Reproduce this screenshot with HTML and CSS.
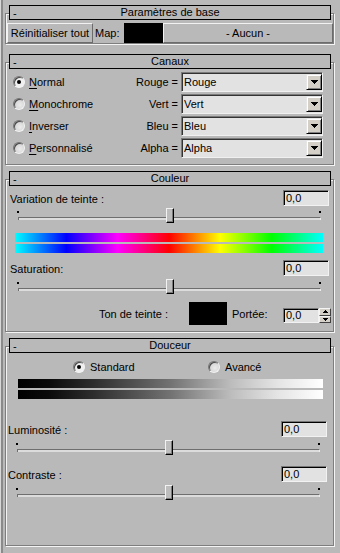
FILE: index.html
```html
<!DOCTYPE html>
<html lang="fr">
<head>
<meta charset="utf-8">
<title>Paramètres</title>
<link rel="stylesheet" href="styles.css">
</head>
<body>
<div class="panel">

  <section class="rollout r1">
    <div class="rhead"><span class="minus">-</span><span class="title">Paramètres de base</span><span></span></div>
    <div class="maprow">
      <div class="btn reset">Réinitialiser tout</div>
      <span class="maplabel">Map:</span>
      <div class="mapswatch"></div>
      <div class="btn aucun">- Aucun -</div>
    </div>
  </section>

  <section class="rollout r2">
    <div class="rhead"><span class="minus">-</span><span class="title">Canaux</span><span></span></div>
    <div class="chan">
      <div class="ritem"><span class="radio on"></span><span><u>N</u>ormal</span></div>
      <div class="clabel">Rouge =</div>
      <div class="dd"><span class="ddtext">Rouge</span><span class="ddbtn"><svg width="7" height="4" viewBox="0 0 7 4"><path d="M0 0h7v1h-1v1h-1v1h-1v1h-1v-1h-1v-1h-1v-1h-1z"/></svg></span></div>

      <div class="ritem"><span class="radio"></span><span><u>M</u>onochrome</span></div>
      <div class="clabel">Vert =</div>
      <div class="dd"><span class="ddtext">Vert</span><span class="ddbtn"><svg width="7" height="4" viewBox="0 0 7 4"><path d="M0 0h7v1h-1v1h-1v1h-1v1h-1v-1h-1v-1h-1v-1h-1z"/></svg></span></div>

      <div class="ritem"><span class="radio"></span><span><u>I</u>nverser</span></div>
      <div class="clabel">Bleu =</div>
      <div class="dd"><span class="ddtext">Bleu</span><span class="ddbtn"><svg width="7" height="4" viewBox="0 0 7 4"><path d="M0 0h7v1h-1v1h-1v1h-1v1h-1v-1h-1v-1h-1v-1h-1z"/></svg></span></div>

      <div class="ritem"><span class="radio"></span><span><u>P</u>ersonnalisé</span></div>
      <div class="clabel">Alpha =</div>
      <div class="dd"><span class="ddtext">Alpha</span><span class="ddbtn"><svg width="7" height="4" viewBox="0 0 7 4"><path d="M0 0h7v1h-1v1h-1v1h-1v1h-1v-1h-1v-1h-1v-1h-1z"/></svg></span></div>
    </div>
  </section>

  <section class="rollout r3">
    <div class="rhead"><span class="minus">-</span><span class="title">Couleur</span><span></span></div>
    <div class="vrow first">
      <span class="vlabel">Variation de teinte :</span>
      <div class="input">0,0</div>
    </div>
    <div class="slider s-coul first-s">
      <span class="tick tl"></span><span class="tick tr"></span>
      <span class="track"></span>
      <span class="thumb"></span>
    </div>
    <div class="bar hue hue1"></div>
    <div class="bar hue hue2"></div>
    <div class="vrow sat">
      <span class="vlabel">Saturation:</span>
      <div class="input">0,0</div>
    </div>
    <div class="slider s-coul">
      <span class="tick tl"></span><span class="tick tr"></span>
      <span class="track"></span>
      <span class="thumb"></span>
    </div>
    <div class="tonrow">
      <span class="tonlabel">Ton de teinte :</span>
      <div class="tonswatch"></div>
      <span class="portlabel">Portée:</span>
      <div class="input spin-input">0,0</div>
      <div class="spin">
        <span class="spinbtn up"><svg width="5" height="3" viewBox="0 0 5 3"><path d="M2 0h1v1h1v1h1v1h-5v-1h1v-1h1z"/></svg></span>
        <span class="spinbtn down"><svg width="5" height="3" viewBox="0 0 5 3"><path d="M0 0h5v1h-1v1h-1v1h-1v-1h-1v-1h-1z"/></svg></span>
      </div>
    </div>
  </section>

  <section class="rollout r4">
    <div class="rhead"><span class="minus">-</span><span class="title">Douceur</span><span></span></div>
    <div class="moderow">
      <div class="mode std"><span class="radio on"></span><span>Standard</span></div>
      <div class="mode"><span class="radio"></span><span>Avancé</span></div>
    </div>
    <div class="bar gray gray1"></div>
    <div class="bar gray gray2"></div>
    <div class="vrow lum">
      <span class="vlabel">Luminosité :</span>
      <div class="input">0,0</div>
    </div>
    <div class="slider s-douc">
      <span class="tick tl"></span><span class="tick tr"></span>
      <span class="track"></span>
      <span class="thumb"></span>
    </div>
    <div class="vrow con">
      <span class="vlabel">Contraste :</span>
      <div class="input">0,0</div>
    </div>
    <div class="slider s-douc">
      <span class="tick tl"></span><span class="tick tr"></span>
      <span class="track"></span>
      <span class="thumb"></span>
    </div>
  </section>

</div>
</body>
</html>
```

FILE: styles.css
```css
* { box-sizing: border-box; }

html, body {
  margin: 0;
  padding: 0;
}

body {
  width: 340px;
  height: 553px;
  overflow: hidden;
  background: #b9b9b9;
  color: #000;
  font-family: "Liberation Sans", Arial, sans-serif;
  font-size: 11px;
}

.panel {
  height: 553px;
  border-left: 1px solid #d8d8d8;
  box-shadow: inset 2px 0 0 #8a8a8a;
  padding: 13px 0 0 4px;
}

/* rollout frame (etched) */
.rollout {
  width: 329px;
  border: 1px solid #7e7e7e;
  box-shadow: inset 1px 1px 0 #f4f4f4, 1px 1px 0 #f4f4f4;
}

.r2, .r3, .r4 { margin-top: 14px; }
.r2 { margin-top: 18px; }

.rhead {
  height: 15px;
  margin: -9px 2px 0 3px;
  border: 1px solid #000;
  background: #b9b9b9;
  display: grid;
  grid-template-columns: 1fr auto 1fr;
  line-height: 13px;
}

.minus {
  padding: 1px 0 0 3px;
}

.title { text-align: center; }

/* generic raised button */
.btn {
  height: 20px;
  border: 1px solid;
  border-color: #f2f2f2 #6c6c6c #6c6c6c #f2f2f2;
  line-height: 18px;
  text-align: center;
  white-space: nowrap;
}

/* rollout 1 */
.maprow {
  display: flex;
  align-items: center;
  height: 20px;
  margin-top: 3px;
  padding-left: 1px;
}
.reset { width: 86px; }
.maplabel { width: 31px; padding-left: 2px; }
.mapswatch { width: 39px; height: 20px; background: #000; }
.aucun { flex: 1; }

/* rollout 2 */
.chan {
  display: grid;
  grid-template-columns: 1fr auto 142px;
  grid-auto-rows: 20px;
  row-gap: 2px;
  margin-top: 3px;
  padding: 0 10px 6px 0;
}

.ritem {
  display: flex;
  align-items: center;
  gap: 4px;
  padding-left: 7px;
  line-height: 20px;
}

u { text-underline-offset: 2px; }

.clabel {
  text-align: right;
  padding-right: 3px;
  line-height: 20px;
}

.radio {
  width: 12px;
  height: 12px;
  flex: none;
  border-radius: 50%;
  border: 1px solid;
  border-color: #777 #f2f2f2 #f2f2f2 #777;
  background: radial-gradient(circle at 60% 60%, #ececec 0, #d6d6d6 60%, #c4c4c4 100%);
  box-shadow: inset 1px 1px 0 #4a4a4a;
  display: grid;
  place-items: center;
}
.radio.on {
  background: #f0f0f0;
}
.radio.on::after {
  content: "";
  width: 4px;
  height: 4px;
  border-radius: 50%;
  background: #000;
}

.dd {
  display: flex;
  align-items: center;
  border: 1px solid;
  border-color: #7a7a7a #f0f0f0 #f0f0f0 #7a7a7a;
  box-shadow: inset 1px 1px 0 #333;
  background: #e2e2e2;
}
.ddtext {
  flex: 1;
  padding-left: 2px;
  line-height: 18px;
}
.ddbtn {
  width: 16px;
  height: 16px;
  background: #d4d0c8;
  border: 1px solid;
  border-color: #e6e6e6 #000 #000 #e6e6e6;
  box-shadow: inset 1px 1px 0 #fff, inset -1px -1px 0 #808080;
  display: grid;
  place-items: center;
}
.ddbtn svg, .spinbtn svg { display: block; }

/* value rows */
.vrow {
  display: flex;
  justify-content: space-between;
  align-items: center;
  height: 16px;
}
.vlabel { line-height: 16px; padding-top: 1px; }

.r3 .vrow { padding: 0 4px 0 4px; }
.r3 .vrow.first { margin-top: 4px; }
.r3 .vrow.sat { margin-top: 7px; }

.input {
  width: 46px;
  height: 16px;
  border: 1px solid;
  border-color: #777 #f2f2f2 #f2f2f2 #777;
  box-shadow: inset 1px 1px 0 #000;
  background: #e2e2e2;
  padding-left: 2px;
  line-height: 14px;
}

/* sliders */
.slider {
  position: relative;
  height: 15px;
  margin-top: 3px;
}
.s-coul { margin-left: 12px; margin-right: 12px; }
.s-coul.first-s { margin-top: 2px; }
.s-douc { margin-left: 11px; margin-right: 13px; }

.tick {
  position: absolute;
  top: 3px;
  width: 2px;
  height: 2px;
  background: #000;
}
.tick.tl { left: -1px; }
.tick.tr { right: 0; }

.track {
  position: absolute;
  left: 0;
  right: 0;
  top: 9px;
  height: 3px;
  border-top: 1px solid #6e6e6e;
  border-left: 1px solid #6e6e6e;
  border-right: 1px solid #ececec;
  background: #dcdcdc;
}

.thumb {
  position: absolute;
  top: 0;
  left: calc(50% - 4px);
  width: 8px;
  height: 15px;
  background: #bdbdbd;
  border: 1px solid;
  border-color: #f2f2f2 #000 #000 #f2f2f2;
  box-shadow: inset -1px -1px 0 #7a7a7a;
}

/* colour bars */
.bar { height: 9px; }
.hue {
  margin: 0 10px 0 9px;
  background: linear-gradient(to right, #0ff 0%, #00f 16.667%, #f0f 33.333%, #f00 50%, #ff0 66.667%, #0f0 83.333%, #0ff 100%);
}
.hue1 { margin-top: 10px; }
.hue2 { margin-top: 2px; }

.gray {
  margin: 0 10px 0 12px;
  background: linear-gradient(to right, #000 0%, #0a0a0a 10%, #2e2e2e 25%, #727272 50%, #bdbdbd 70%, #e4e4e4 85%, #fff 100%);
}
.gray1 { margin-top: 6px; }
.gray2 { margin-top: 2px; }

/* ton de teinte row */
.tonrow {
  display: flex;
  align-items: center;
  height: 23px;
  margin-top: 8px;
  margin-bottom: 6px;
}
.tonlabel {
  width: 183px;
  text-align: right;
  padding-right: 21px;
  padding-top: 1px;
}
.tonswatch { width: 38px; height: 23px; background: #000; }
.portlabel { width: 56px; padding-left: 5px; padding-top: 1px; }
.spin-input {
  width: 36px;
  height: 15px;
  line-height: 13px;
  align-self: flex-start;
  margin-top: 6px;
}
.spin {
  width: 12px;
  height: 15px;
  align-self: flex-start;
  margin-top: 6px;
  display: flex;
  flex-direction: column;
}
.spinbtn {
  flex: 1;
  background: #d4d0c8;
  border: 1px solid;
  border-color: #f4f4f4 #404040 #404040 #f4f4f4;
  display: grid;
  place-items: center;
}

/* douceur */
.moderow {
  display: flex;
  align-items: center;
  height: 12px;
  margin-top: 8px;
  padding-left: 67px;
}
.mode {
  display: flex;
  align-items: center;
  gap: 5px;
}
.mode.std { width: 135px; }

.r4 .vrow { padding: 0 6px 0 2px; }
.r4 .vrow.lum { margin-top: 22px; }
.r4 .vrow.con { margin-top: 11px; }
.r4 { padding-bottom: 45px; }
```
